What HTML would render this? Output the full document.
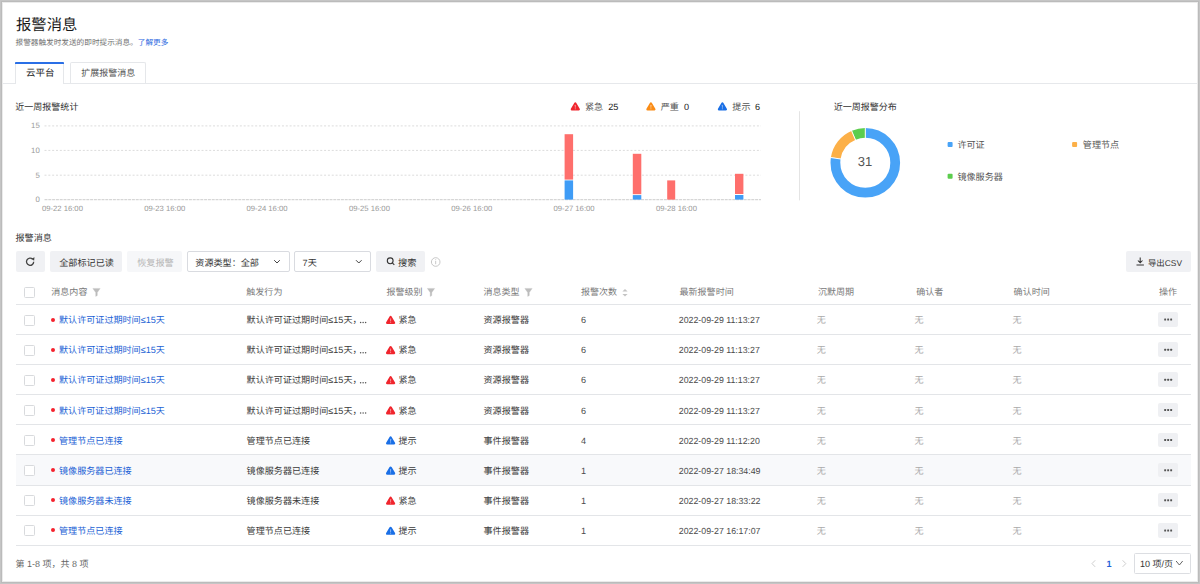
<!DOCTYPE html>
<html lang="zh-CN"><head><meta charset="utf-8">
<style>
*{box-sizing:border-box;margin:0;padding:0}
html,body{width:1200px;height:584px;overflow:hidden;background:#fff}
body{position:relative;font-family:"Liberation Sans",sans-serif;text-rendering:geometricPrecision;white-space:nowrap;color:#333}
.a{position:absolute}
.t{position:absolute;line-height:20px;height:20px}
.bd{position:absolute;background:#c4c4c4;z-index:50}
.btn{position:absolute;background:#f0f1f4;border-radius:2px}
.sel{position:absolute;border:1px solid #d9dbe0;border-radius:2px;background:#fff}
.cb{position:absolute;width:11px;height:11px;border:1px solid #d8dadd;border-radius:1.5px;background:#fff}
.more{position:absolute;left:1158px;width:20px;height:14.5px;background:#eff0f3;border-radius:2px}
svg{position:absolute;left:0;top:0}
</style></head>
<body>
<div class="a" style="left:0;top:0;width:1200px;height:584px;z-index:50;box-shadow:inset 0 0 0 1px #c5c5c5,inset 0 0 0 2px #bbbbbb,inset 0 0 0 3px #ebebeb"></div>
<div class="t" style="left:16px;top:16.00px;font-size:15.34px;color:#1a1a1a;">报警消息</div>
<div class="t" style="left:15.5px;top:32.90px;font-size:7.65px;color:#707070;">报警器触发时发送的即时提示消息。<span style="color:#1f66e0">了解更多</span></div>
<div class="a" style="left:15.2px;top:62px;width:48.8px;height:22px;border-left:1px solid #e5e7ea;border-right:1px solid #e5e7ea;background:#fff;z-index:2"></div>
<div class="a" style="left:15.2px;top:62px;width:48.8px;height:2px;background:#2a6fe6;border-radius:1px 1px 0 0;z-index:3"></div>
<div class="t" style="left:26px;top:64.10px;font-size:9.47px;color:#222;z-index:4">云平台</div>
<div class="a" style="left:70px;top:62px;width:75.8px;height:21.5px;border:1px solid #e5e7ea;border-bottom:none;border-radius:2px 2px 0 0;background:#fff"></div>
<div class="t" style="left:81.25px;top:63.00px;font-size:9.03px;color:#555;">扩展报警消息</div>
<div class="a" style="left:2px;top:83px;width:1196px;height:1px;background:#e6e8eb;z-index:1"></div>
<div class="a" style="left:16px;top:83px;width:47px;height:1px;background:#fff;z-index:3"></div>
<div class="t" style="left:15.3px;top:97.45px;font-size:9.02px;color:#333;">近一周报警统计</div>
<div class="t" style="left:0;width:39.8px;text-align:right;top:115.60px;font-size:7.8px;color:#999">15</div>
<div class="t" style="left:0;width:39.8px;text-align:right;top:140.80px;font-size:7.8px;color:#999">10</div>
<div class="t" style="left:0;width:39.8px;text-align:right;top:165.80px;font-size:7.8px;color:#999">5</div>
<div class="t" style="left:0;width:39.8px;text-align:right;top:189.80px;font-size:7.8px;color:#999">0</div>
<div class="t" style="left:41.90px;top:198.60px;font-size:7.7px;color:#999">09-22 16:00</div>
<div class="t" style="left:144.23px;top:198.60px;font-size:7.7px;color:#999">09-23 16:00</div>
<div class="t" style="left:246.56px;top:198.60px;font-size:7.7px;color:#999">09-24 16:00</div>
<div class="t" style="left:348.89px;top:198.60px;font-size:7.7px;color:#999">09-25 16:00</div>
<div class="t" style="left:451.22px;top:198.60px;font-size:7.7px;color:#999">09-26 16:00</div>
<div class="t" style="left:553.55px;top:198.60px;font-size:7.7px;color:#999">09-27 16:00</div>
<div class="t" style="left:655.88px;top:198.60px;font-size:7.7px;color:#999">09-28 16:00</div>
<div class="t" style="left:585px;top:96.70px;font-size:9.1px;color:#555;">紧急</div>
<div class="t" style="left:608.3px;top:96.70px;font-size:9.1px;color:#222;">25</div>
<div class="t" style="left:660.7px;top:96.70px;font-size:9.1px;color:#555;">严重</div>
<div class="t" style="left:684px;top:96.70px;font-size:9.1px;color:#222;">0</div>
<div class="t" style="left:732.3px;top:96.70px;font-size:9.1px;color:#555;">提示</div>
<div class="t" style="left:755px;top:96.70px;font-size:9.1px;color:#222;">6</div>
<div class="t" style="left:833.7px;top:97.10px;font-size:9.03px;color:#333;">近一周报警分布</div>
<div class="t" style="left:845px;width:40px;text-align:center;top:152.0px;font-size:13px;color:#555">31</div>
<div class="t" style="left:957.4px;top:135.40px;font-size:9.1px;color:#555;">许可证</div>
<div class="t" style="left:1082.8px;top:135.40px;font-size:9.1px;color:#555;">管理节点</div>
<div class="t" style="left:957.4px;top:167.00px;font-size:9.1px;color:#555;">镜像服务器</div>
<div class="t" style="left:15.5px;top:227.95px;font-size:9.1px;color:#333;">报警消息</div>
<div class="btn" style="left:15.5px;top:251.3px;width:29px;height:20.3px"></div>
<div class="btn" style="left:49.6px;top:251.3px;width:72.8px;height:20.3px"></div>
<div class="t" style="left:59.2px;top:252.70px;font-size:9.14px;color:#333;">全部标记已读</div>
<div class="btn" style="left:127.3px;top:251.3px;width:54.5px;height:20.3px;background:#f6f7f9"></div>
<div class="t" style="left:137.2px;top:252.70px;font-size:9.14px;color:#b5b5b5;">恢复报警</div>
<div class="sel" style="left:187.4px;top:251.3px;width:102.2px;height:20.3px"></div>
<div class="t" style="left:195.3px;top:252.70px;font-size:9.11px;color:#333;">资源类型：全部</div>
<div class="sel" style="left:294.3px;top:251.3px;width:76.5px;height:20.3px"></div>
<div class="t" style="left:302.6px;top:252.70px;font-size:9.1px;color:#333;">7天</div>
<div class="btn" style="left:376.2px;top:251.3px;width:49px;height:20.3px"></div>
<div class="t" style="left:398px;top:252.70px;font-size:9.23px;color:#333;">搜索</div>
<div class="btn" style="left:1125.8px;top:251.3px;width:65px;height:20.3px"></div>
<div class="t" style="left:1148px;top:252.70px;font-size:8.4px;color:#333;">导出CSV</div>
<div class="cb" style="left:24px;top:287px"></div>
<div class="t" style="left:51.3px;top:282.20px;font-size:9.04px;color:#7a7a7a;">消息内容</div>
<div class="t" style="left:246.3px;top:282.20px;font-size:9.04px;color:#7a7a7a;">触发行为</div>
<div class="t" style="left:386.5px;top:282.20px;font-size:9.04px;color:#7a7a7a;">报警级别</div>
<div class="t" style="left:483.5px;top:282.20px;font-size:9.04px;color:#7a7a7a;">消息类型</div>
<div class="t" style="left:581px;top:282.20px;font-size:9.04px;color:#7a7a7a;">报警次数</div>
<div class="t" style="left:679.5px;top:282.20px;font-size:9.04px;color:#7a7a7a;">最新报警时间</div>
<div class="t" style="left:818px;top:282.20px;font-size:9.04px;color:#7a7a7a;">沉默周期</div>
<div class="t" style="left:916.2px;top:282.20px;font-size:9.04px;color:#7a7a7a;">确认者</div>
<div class="t" style="left:1013.6px;top:282.20px;font-size:9.04px;color:#7a7a7a;">确认时间</div>
<div class="t" style="left:1159px;top:282.20px;font-size:9.04px;color:#7a7a7a;">操作</div>
<div class="a" style="left:15.5px;top:304px;width:1175.5px;height:1px;background:#e3e5e8"></div>
<div class="a" style="left:15.5px;top:334px;width:1175.5px;height:1px;background:#e3e5e8"></div>
<div class="cb" style="left:24px;top:314.60px"></div>
<div class="a" style="left:50.75px;top:317.50px;width:4px;height:4px;border-radius:50%;background:#f5222d"></div>
<div class="t" style="left:59px;top:310.20px;font-size:9.09px;color:#1b5fd5;">默认许可证过期时间≤15天</div>
<div class="t" style="left:246.6px;top:310.20px;font-size:9.09px;color:#3a3a3a;">默认许可证过期时间≤15天，</div>
<div class="t" style="left:398.5px;top:310.20px;font-size:9.1px;color:#3a3a3a;">紧急</div>
<div class="t" style="left:483.5px;top:310.20px;font-size:9.1px;color:#3a3a3a;">资源报警器</div>
<div class="t" style="left:581px;top:310.20px;font-size:9.1px;color:#4a4a4a;">6</div>
<div class="t" style="left:678.8px;top:310.20px;font-size:8.81px;color:#4a4a4a;">2022-09-29 11:13:27</div>
<div class="t" style="left:816.8px;top:310.20px;font-size:9.1px;color:#aaa;">无</div>
<div class="t" style="left:914.5px;top:310.20px;font-size:9.1px;color:#aaa;">无</div>
<div class="t" style="left:1012.6px;top:310.20px;font-size:9.1px;color:#aaa;">无</div>
<div class="more" style="top:312.20px"></div>
<div class="a" style="left:15.5px;top:364px;width:1175.5px;height:1px;background:#e3e5e8"></div>
<div class="cb" style="left:24px;top:344.73px"></div>
<div class="a" style="left:50.75px;top:347.62px;width:4px;height:4px;border-radius:50%;background:#f5222d"></div>
<div class="t" style="left:59px;top:340.32px;font-size:9.09px;color:#1b5fd5;">默认许可证过期时间≤15天</div>
<div class="t" style="left:246.6px;top:340.32px;font-size:9.09px;color:#3a3a3a;">默认许可证过期时间≤15天，</div>
<div class="t" style="left:398.5px;top:340.32px;font-size:9.1px;color:#3a3a3a;">紧急</div>
<div class="t" style="left:483.5px;top:340.32px;font-size:9.1px;color:#3a3a3a;">资源报警器</div>
<div class="t" style="left:581px;top:340.32px;font-size:9.1px;color:#4a4a4a;">6</div>
<div class="t" style="left:678.8px;top:340.32px;font-size:8.81px;color:#4a4a4a;">2022-09-29 11:13:27</div>
<div class="t" style="left:816.8px;top:340.32px;font-size:9.1px;color:#aaa;">无</div>
<div class="t" style="left:914.5px;top:340.32px;font-size:9.1px;color:#aaa;">无</div>
<div class="t" style="left:1012.6px;top:340.32px;font-size:9.1px;color:#aaa;">无</div>
<div class="more" style="top:342.32px"></div>
<div class="a" style="left:15.5px;top:394px;width:1175.5px;height:1px;background:#e3e5e8"></div>
<div class="cb" style="left:24px;top:374.85px"></div>
<div class="a" style="left:50.75px;top:377.75px;width:4px;height:4px;border-radius:50%;background:#f5222d"></div>
<div class="t" style="left:59px;top:370.45px;font-size:9.09px;color:#1b5fd5;">默认许可证过期时间≤15天</div>
<div class="t" style="left:246.6px;top:370.45px;font-size:9.09px;color:#3a3a3a;">默认许可证过期时间≤15天，</div>
<div class="t" style="left:398.5px;top:370.45px;font-size:9.1px;color:#3a3a3a;">紧急</div>
<div class="t" style="left:483.5px;top:370.45px;font-size:9.1px;color:#3a3a3a;">资源报警器</div>
<div class="t" style="left:581px;top:370.45px;font-size:9.1px;color:#4a4a4a;">6</div>
<div class="t" style="left:678.8px;top:370.45px;font-size:8.81px;color:#4a4a4a;">2022-09-29 11:13:27</div>
<div class="t" style="left:816.8px;top:370.45px;font-size:9.1px;color:#aaa;">无</div>
<div class="t" style="left:914.5px;top:370.45px;font-size:9.1px;color:#aaa;">无</div>
<div class="t" style="left:1012.6px;top:370.45px;font-size:9.1px;color:#aaa;">无</div>
<div class="more" style="top:372.45px"></div>
<div class="a" style="left:15.5px;top:424px;width:1175.5px;height:1px;background:#e3e5e8"></div>
<div class="cb" style="left:24px;top:404.98px"></div>
<div class="a" style="left:50.75px;top:407.88px;width:4px;height:4px;border-radius:50%;background:#f5222d"></div>
<div class="t" style="left:59px;top:400.57px;font-size:9.09px;color:#1b5fd5;">默认许可证过期时间≤15天</div>
<div class="t" style="left:246.6px;top:400.57px;font-size:9.09px;color:#3a3a3a;">默认许可证过期时间≤15天，</div>
<div class="t" style="left:398.5px;top:400.57px;font-size:9.1px;color:#3a3a3a;">紧急</div>
<div class="t" style="left:483.5px;top:400.57px;font-size:9.1px;color:#3a3a3a;">资源报警器</div>
<div class="t" style="left:581px;top:400.57px;font-size:9.1px;color:#4a4a4a;">6</div>
<div class="t" style="left:678.8px;top:400.57px;font-size:8.81px;color:#4a4a4a;">2022-09-29 11:13:27</div>
<div class="t" style="left:816.8px;top:400.57px;font-size:9.1px;color:#aaa;">无</div>
<div class="t" style="left:914.5px;top:400.57px;font-size:9.1px;color:#aaa;">无</div>
<div class="t" style="left:1012.6px;top:400.57px;font-size:9.1px;color:#aaa;">无</div>
<div class="more" style="top:402.57px"></div>
<div class="a" style="left:15.5px;top:454px;width:1175.5px;height:1px;background:#e3e5e8"></div>
<div class="cb" style="left:24px;top:435.10px"></div>
<div class="a" style="left:50.75px;top:438.00px;width:4px;height:4px;border-radius:50%;background:#f5222d"></div>
<div class="t" style="left:59px;top:430.70px;font-size:9.09px;color:#1b5fd5;">管理节点已连接</div>
<div class="t" style="left:246.6px;top:430.70px;font-size:9.09px;color:#3a3a3a;">管理节点已连接</div>
<div class="t" style="left:398.5px;top:430.70px;font-size:9.1px;color:#3a3a3a;">提示</div>
<div class="t" style="left:483.5px;top:430.70px;font-size:9.1px;color:#3a3a3a;">事件报警器</div>
<div class="t" style="left:581px;top:430.70px;font-size:9.1px;color:#4a4a4a;">4</div>
<div class="t" style="left:678.8px;top:430.70px;font-size:8.81px;color:#4a4a4a;">2022-09-29 11:12:20</div>
<div class="t" style="left:816.8px;top:430.70px;font-size:9.1px;color:#aaa;">无</div>
<div class="t" style="left:914.5px;top:430.70px;font-size:9.1px;color:#aaa;">无</div>
<div class="t" style="left:1012.6px;top:430.70px;font-size:9.1px;color:#aaa;">无</div>
<div class="more" style="top:432.70px"></div>
<div class="a" style="left:15.5px;top:455px;width:1175.5px;height:30px;background:#f8f9fb"></div>
<div class="a" style="left:15.5px;top:485px;width:1175.5px;height:1px;background:#e3e5e8"></div>
<div class="cb" style="left:24px;top:465.23px"></div>
<div class="a" style="left:50.75px;top:468.12px;width:4px;height:4px;border-radius:50%;background:#f5222d"></div>
<div class="t" style="left:59px;top:460.82px;font-size:9.09px;color:#1b5fd5;">镜像服务器已连接</div>
<div class="t" style="left:246.6px;top:460.82px;font-size:9.09px;color:#3a3a3a;">镜像服务器已连接</div>
<div class="t" style="left:398.5px;top:460.82px;font-size:9.1px;color:#3a3a3a;">提示</div>
<div class="t" style="left:483.5px;top:460.82px;font-size:9.1px;color:#3a3a3a;">事件报警器</div>
<div class="t" style="left:581px;top:460.82px;font-size:9.1px;color:#4a4a4a;">1</div>
<div class="t" style="left:678.8px;top:460.82px;font-size:8.81px;color:#4a4a4a;">2022-09-27 18:34:49</div>
<div class="t" style="left:816.8px;top:460.82px;font-size:9.1px;color:#aaa;">无</div>
<div class="t" style="left:914.5px;top:460.82px;font-size:9.1px;color:#aaa;">无</div>
<div class="t" style="left:1012.6px;top:460.82px;font-size:9.1px;color:#aaa;">无</div>
<div class="more" style="top:462.82px"></div>
<div class="a" style="left:15.5px;top:515px;width:1175.5px;height:1px;background:#e3e5e8"></div>
<div class="cb" style="left:24px;top:495.35px"></div>
<div class="a" style="left:50.75px;top:498.25px;width:4px;height:4px;border-radius:50%;background:#f5222d"></div>
<div class="t" style="left:59px;top:490.95px;font-size:9.09px;color:#1b5fd5;">镜像服务器未连接</div>
<div class="t" style="left:246.6px;top:490.95px;font-size:9.09px;color:#3a3a3a;">镜像服务器未连接</div>
<div class="t" style="left:398.5px;top:490.95px;font-size:9.1px;color:#3a3a3a;">紧急</div>
<div class="t" style="left:483.5px;top:490.95px;font-size:9.1px;color:#3a3a3a;">事件报警器</div>
<div class="t" style="left:581px;top:490.95px;font-size:9.1px;color:#4a4a4a;">1</div>
<div class="t" style="left:678.8px;top:490.95px;font-size:8.81px;color:#4a4a4a;">2022-09-27 18:33:22</div>
<div class="t" style="left:816.8px;top:490.95px;font-size:9.1px;color:#aaa;">无</div>
<div class="t" style="left:914.5px;top:490.95px;font-size:9.1px;color:#aaa;">无</div>
<div class="t" style="left:1012.6px;top:490.95px;font-size:9.1px;color:#aaa;">无</div>
<div class="more" style="top:492.95px"></div>
<div class="a" style="left:15.5px;top:545px;width:1175.5px;height:1px;background:#e3e5e8"></div>
<div class="cb" style="left:24px;top:525.48px"></div>
<div class="a" style="left:50.75px;top:528.38px;width:4px;height:4px;border-radius:50%;background:#f5222d"></div>
<div class="t" style="left:59px;top:521.08px;font-size:9.09px;color:#1b5fd5;">管理节点已连接</div>
<div class="t" style="left:246.6px;top:521.08px;font-size:9.09px;color:#3a3a3a;">管理节点已连接</div>
<div class="t" style="left:398.5px;top:521.08px;font-size:9.1px;color:#3a3a3a;">提示</div>
<div class="t" style="left:483.5px;top:521.08px;font-size:9.1px;color:#3a3a3a;">事件报警器</div>
<div class="t" style="left:581px;top:521.08px;font-size:9.1px;color:#4a4a4a;">1</div>
<div class="t" style="left:678.8px;top:521.08px;font-size:8.81px;color:#4a4a4a;">2022-09-27 16:17:07</div>
<div class="t" style="left:816.8px;top:521.08px;font-size:9.1px;color:#aaa;">无</div>
<div class="t" style="left:914.5px;top:521.08px;font-size:9.1px;color:#aaa;">无</div>
<div class="t" style="left:1012.6px;top:521.08px;font-size:9.1px;color:#aaa;">无</div>
<div class="more" style="top:523.08px"></div>
<div class="t" style="left:15.5px;top:554.20px;font-size:9.01px;color:#666;">第 1-8 项，共 8 项</div>
<div class="t" style="left:1106.5px;top:554.20px;font-size:9.1px;color:#1f62d8;font-weight:bold">1</div>
<div class="sel" style="left:1134.3px;top:553.4px;width:56.4px;height:20.3px;border-color:#dcdee2;border-radius:1.5px"></div>
<div class="t" style="left:1140px;top:554.20px;font-size:9.03px;color:#333;">10 项/页</div>
<svg width="1200" height="584" viewBox="0 0 1200 584" style="z-index:10;pointer-events:none">
<line x1="44.5" y1="125.9" x2="761" y2="125.9" stroke="#dcdcdc" stroke-width="1" stroke-dasharray="2 1.83"/>
<line x1="44.5" y1="150.4" x2="761" y2="150.4" stroke="#dcdcdc" stroke-width="1" stroke-dasharray="2 1.83"/>
<line x1="44.5" y1="175.2" x2="761" y2="175.2" stroke="#dcdcdc" stroke-width="1" stroke-dasharray="2 1.83"/>
<line x1="44.5" y1="199.7" x2="761" y2="199.7" stroke="#d6d6d6" stroke-width="1.2" stroke-dasharray="3 0.8"/>
<rect x="564.6" y="134.2" width="8.50" height="45.40" fill="#fe6f6c"/>
<rect x="564.6" y="180.4" width="8.50" height="19.20" fill="#3f9cf6"/>
<rect x="632.8" y="153.8" width="8.50" height="40.40" fill="#fe6f6c"/>
<rect x="632.8" y="195.1" width="8.50" height="4.50" fill="#3f9cf6"/>
<rect x="667.2" y="180.4" width="8.00" height="19.20" fill="#fe6f6c"/>
<rect x="735" y="173.8" width="8.40" height="20.20" fill="#fe6f6c"/>
<rect x="735" y="195.0" width="8.40" height="4.60" fill="#3f9cf6"/>
<path d="M575.30 103.60 L578.70 109.30 L571.90 109.30 Z" fill="#f0252d" stroke="#f0252d" stroke-width="2.4" stroke-linejoin="round"/><rect x="574.80" y="104.80" width="1" height="3" rx="0.4" fill="rgba(255,255,255,0.5)"/><rect x="574.80" y="108.30" width="1" height="1" fill="rgba(255,255,255,0.5)"/>
<path d="M650.90 103.60 L654.30 109.30 L647.50 109.30 Z" fill="#fa8c16" stroke="#fa8c16" stroke-width="2.4" stroke-linejoin="round"/><rect x="650.40" y="104.80" width="1" height="3" rx="0.4" fill="rgba(255,255,255,0.5)"/><rect x="650.40" y="108.30" width="1" height="1" fill="rgba(255,255,255,0.5)"/>
<path d="M722.40 103.60 L725.80 109.30 L719.00 109.30 Z" fill="#1a6fe6" stroke="#1a6fe6" stroke-width="2.4" stroke-linejoin="round"/><rect x="721.90" y="104.80" width="1" height="3" rx="0.4" fill="rgba(255,255,255,0.5)"/><rect x="721.90" y="108.30" width="1" height="1" fill="rgba(255,255,255,0.5)"/>
<line x1="799.5" y1="111.2" x2="799.5" y2="200.4" stroke="#e4e4e4" stroke-width="1"/>
<circle cx="865.3" cy="162.8" r="29.9" fill="none" stroke="#48a3f7" stroke-width="9.8" stroke-dasharray="145.446 187.867" stroke-dashoffset="0.000" transform="rotate(-90 865.3 162.8)"/>
<circle cx="865.3" cy="162.8" r="29.9" fill="none" stroke="#fcb048" stroke-width="9.8" stroke-dasharray="30.301 187.867" stroke-dashoffset="-145.446" transform="rotate(-90 865.3 162.8)"/>
<circle cx="865.3" cy="162.8" r="29.9" fill="none" stroke="#5ccd4d" stroke-width="9.8" stroke-dasharray="12.120 187.867" stroke-dashoffset="-175.747" transform="rotate(-90 865.3 162.8)"/>
<line x1="865.30" y1="138.80" x2="865.30" y2="126.80" stroke="#fff" stroke-width="1"/>
<line x1="841.58" y1="159.17" x2="829.72" y2="157.35" stroke="#fff" stroke-width="1"/>
<line x1="855.84" y1="140.75" x2="851.10" y2="129.72" stroke="#fff" stroke-width="1"/>
<rect x="947.6" y="142" width="5" height="5" rx="1" fill="#48a3f7"/>
<rect x="1072.1" y="142" width="5" height="5" rx="1" fill="#fcb048"/>
<rect x="947.6" y="173.8" width="5" height="5" rx="1" fill="#5ccd4d"/>
<path d="M33.7 261.8 A3.6 3.6 0 1 1 32.65 259.2" fill="none" stroke="#444" stroke-width="1.3"/>
<path d="M31.3 258.7 L34.5 257.2 L34.1 260.7 Z" fill="#444"/>
<path d="M274.2 260.2 L277 263 L279.8 260.2" fill="none" stroke="#444" stroke-width="1"/>
<path d="M356.0 260.2 L358.8 263 L361.6 260.2" fill="none" stroke="#444" stroke-width="1"/>
<circle cx="390.2" cy="260.8" r="2.9" fill="none" stroke="#333" stroke-width="1.1"/>
<line x1="392.3" y1="262.9" x2="394.3" y2="264.9" stroke="#333" stroke-width="1.1"/>
<circle cx="435.7" cy="262" r="4.3" fill="none" stroke="#c2c2c2" stroke-width="0.9"/>
<rect x="435.25" y="261" width="0.9" height="3.2" fill="#c2c2c2"/><rect x="435.25" y="259.3" width="0.9" height="0.9" fill="#c2c2c2"/>
<path d="M1140.2 257.6 L1140.2 262.6 M1137.9 260.5 L1140.2 262.8 L1142.5 260.5 M1136.5 264.9 L1143.9 264.9" fill="none" stroke="#333" stroke-width="1.05"/>
<path d="M92.8 288.4 L100.2 288.4 L97.3 292.6 L97.3 295.6 L95.7 296.4 L95.7 292.6 Z" fill="#bdbdbd" stroke="#bdbdbd" stroke-width="0.3" stroke-linejoin="round"/>
<path d="M427.3 288.4 L434.7 288.4 L431.8 292.6 L431.8 295.6 L430.2 296.4 L430.2 292.6 Z" fill="#bdbdbd" stroke="#bdbdbd" stroke-width="0.3" stroke-linejoin="round"/>
<path d="M524.8 288.4 L532.2 288.4 L529.3 292.6 L529.3 295.6 L527.7 296.4 L527.7 292.6 Z" fill="#bdbdbd" stroke="#bdbdbd" stroke-width="0.3" stroke-linejoin="round"/>
<path d="M622.4 291.6 L625 288.9 L627.6 291.6 Z M622.4 293.9 L625 296.6 L627.6 293.9 Z" fill="#c4c4c4"/>
<path d="M390.60 317.10 L394.00 322.80 L387.20 322.80 Z" fill="#f0252d" stroke="#f0252d" stroke-width="2.4" stroke-linejoin="round"/><rect x="390.10" y="318.30" width="1" height="3" rx="0.4" fill="rgba(255,255,255,0.5)"/><rect x="390.10" y="321.80" width="1" height="1" fill="rgba(255,255,255,0.5)"/>
<circle cx="360.6" cy="322.60" r="0.75" fill="#555"/>
<circle cx="363.1" cy="322.60" r="0.75" fill="#555"/>
<circle cx="365.6" cy="322.60" r="0.75" fill="#555"/>
<rect x="1164.2" y="318.60" width="1.9" height="1.9" rx="0.5" fill="#555"/>
<rect x="1167.2" y="318.60" width="1.9" height="1.9" rx="0.5" fill="#555"/>
<rect x="1170.2" y="318.60" width="1.9" height="1.9" rx="0.5" fill="#555"/>
<path d="M390.60 347.22 L394.00 352.93 L387.20 352.93 Z" fill="#f0252d" stroke="#f0252d" stroke-width="2.4" stroke-linejoin="round"/><rect x="390.10" y="348.43" width="1" height="3" rx="0.4" fill="rgba(255,255,255,0.5)"/><rect x="390.10" y="351.93" width="1" height="1" fill="rgba(255,255,255,0.5)"/>
<circle cx="360.6" cy="352.73" r="0.75" fill="#555"/>
<circle cx="363.1" cy="352.73" r="0.75" fill="#555"/>
<circle cx="365.6" cy="352.73" r="0.75" fill="#555"/>
<rect x="1164.2" y="348.73" width="1.9" height="1.9" rx="0.5" fill="#555"/>
<rect x="1167.2" y="348.73" width="1.9" height="1.9" rx="0.5" fill="#555"/>
<rect x="1170.2" y="348.73" width="1.9" height="1.9" rx="0.5" fill="#555"/>
<path d="M390.60 377.35 L394.00 383.05 L387.20 383.05 Z" fill="#f0252d" stroke="#f0252d" stroke-width="2.4" stroke-linejoin="round"/><rect x="390.10" y="378.55" width="1" height="3" rx="0.4" fill="rgba(255,255,255,0.5)"/><rect x="390.10" y="382.05" width="1" height="1" fill="rgba(255,255,255,0.5)"/>
<circle cx="360.6" cy="382.85" r="0.75" fill="#555"/>
<circle cx="363.1" cy="382.85" r="0.75" fill="#555"/>
<circle cx="365.6" cy="382.85" r="0.75" fill="#555"/>
<rect x="1164.2" y="378.85" width="1.9" height="1.9" rx="0.5" fill="#555"/>
<rect x="1167.2" y="378.85" width="1.9" height="1.9" rx="0.5" fill="#555"/>
<rect x="1170.2" y="378.85" width="1.9" height="1.9" rx="0.5" fill="#555"/>
<path d="M390.60 407.47 L394.00 413.18 L387.20 413.18 Z" fill="#f0252d" stroke="#f0252d" stroke-width="2.4" stroke-linejoin="round"/><rect x="390.10" y="408.68" width="1" height="3" rx="0.4" fill="rgba(255,255,255,0.5)"/><rect x="390.10" y="412.18" width="1" height="1" fill="rgba(255,255,255,0.5)"/>
<circle cx="360.6" cy="412.98" r="0.75" fill="#555"/>
<circle cx="363.1" cy="412.98" r="0.75" fill="#555"/>
<circle cx="365.6" cy="412.98" r="0.75" fill="#555"/>
<rect x="1164.2" y="408.98" width="1.9" height="1.9" rx="0.5" fill="#555"/>
<rect x="1167.2" y="408.98" width="1.9" height="1.9" rx="0.5" fill="#555"/>
<rect x="1170.2" y="408.98" width="1.9" height="1.9" rx="0.5" fill="#555"/>
<path d="M390.60 437.60 L394.00 443.30 L387.20 443.30 Z" fill="#1a6fe6" stroke="#1a6fe6" stroke-width="2.4" stroke-linejoin="round"/><rect x="390.10" y="438.80" width="1" height="3" rx="0.4" fill="rgba(255,255,255,0.5)"/><rect x="390.10" y="442.30" width="1" height="1" fill="rgba(255,255,255,0.5)"/>
<rect x="1164.2" y="439.10" width="1.9" height="1.9" rx="0.5" fill="#555"/>
<rect x="1167.2" y="439.10" width="1.9" height="1.9" rx="0.5" fill="#555"/>
<rect x="1170.2" y="439.10" width="1.9" height="1.9" rx="0.5" fill="#555"/>
<path d="M390.60 467.72 L394.00 473.43 L387.20 473.43 Z" fill="#1a6fe6" stroke="#1a6fe6" stroke-width="2.4" stroke-linejoin="round"/><rect x="390.10" y="468.93" width="1" height="3" rx="0.4" fill="rgba(255,255,255,0.5)"/><rect x="390.10" y="472.43" width="1" height="1" fill="rgba(255,255,255,0.5)"/>
<rect x="1164.2" y="469.23" width="1.9" height="1.9" rx="0.5" fill="#555"/>
<rect x="1167.2" y="469.23" width="1.9" height="1.9" rx="0.5" fill="#555"/>
<rect x="1170.2" y="469.23" width="1.9" height="1.9" rx="0.5" fill="#555"/>
<path d="M390.60 497.85 L394.00 503.55 L387.20 503.55 Z" fill="#f0252d" stroke="#f0252d" stroke-width="2.4" stroke-linejoin="round"/><rect x="390.10" y="499.05" width="1" height="3" rx="0.4" fill="rgba(255,255,255,0.5)"/><rect x="390.10" y="502.55" width="1" height="1" fill="rgba(255,255,255,0.5)"/>
<rect x="1164.2" y="499.35" width="1.9" height="1.9" rx="0.5" fill="#555"/>
<rect x="1167.2" y="499.35" width="1.9" height="1.9" rx="0.5" fill="#555"/>
<rect x="1170.2" y="499.35" width="1.9" height="1.9" rx="0.5" fill="#555"/>
<path d="M390.60 527.98 L394.00 533.67 L387.20 533.67 Z" fill="#1a6fe6" stroke="#1a6fe6" stroke-width="2.4" stroke-linejoin="round"/><rect x="390.10" y="529.18" width="1" height="3" rx="0.4" fill="rgba(255,255,255,0.5)"/><rect x="390.10" y="532.68" width="1" height="1" fill="rgba(255,255,255,0.5)"/>
<rect x="1164.2" y="529.48" width="1.9" height="1.9" rx="0.5" fill="#555"/>
<rect x="1167.2" y="529.48" width="1.9" height="1.9" rx="0.5" fill="#555"/>
<rect x="1170.2" y="529.48" width="1.9" height="1.9" rx="0.5" fill="#555"/>
<path d="M1095.2 560.3 L1092 563.6 L1095.2 566.9" fill="none" stroke="#c8c8c8" stroke-width="0.9"/>
<path d="M1122.6 560.3 L1125.8 563.6 L1122.6 566.9" fill="none" stroke="#c8c8c8" stroke-width="0.9"/>
<path d="M1176.1 561 L1179.4 565 L1182.7 561" fill="none" stroke="#555" stroke-width="0.9"/>
</svg>
</body></html>
